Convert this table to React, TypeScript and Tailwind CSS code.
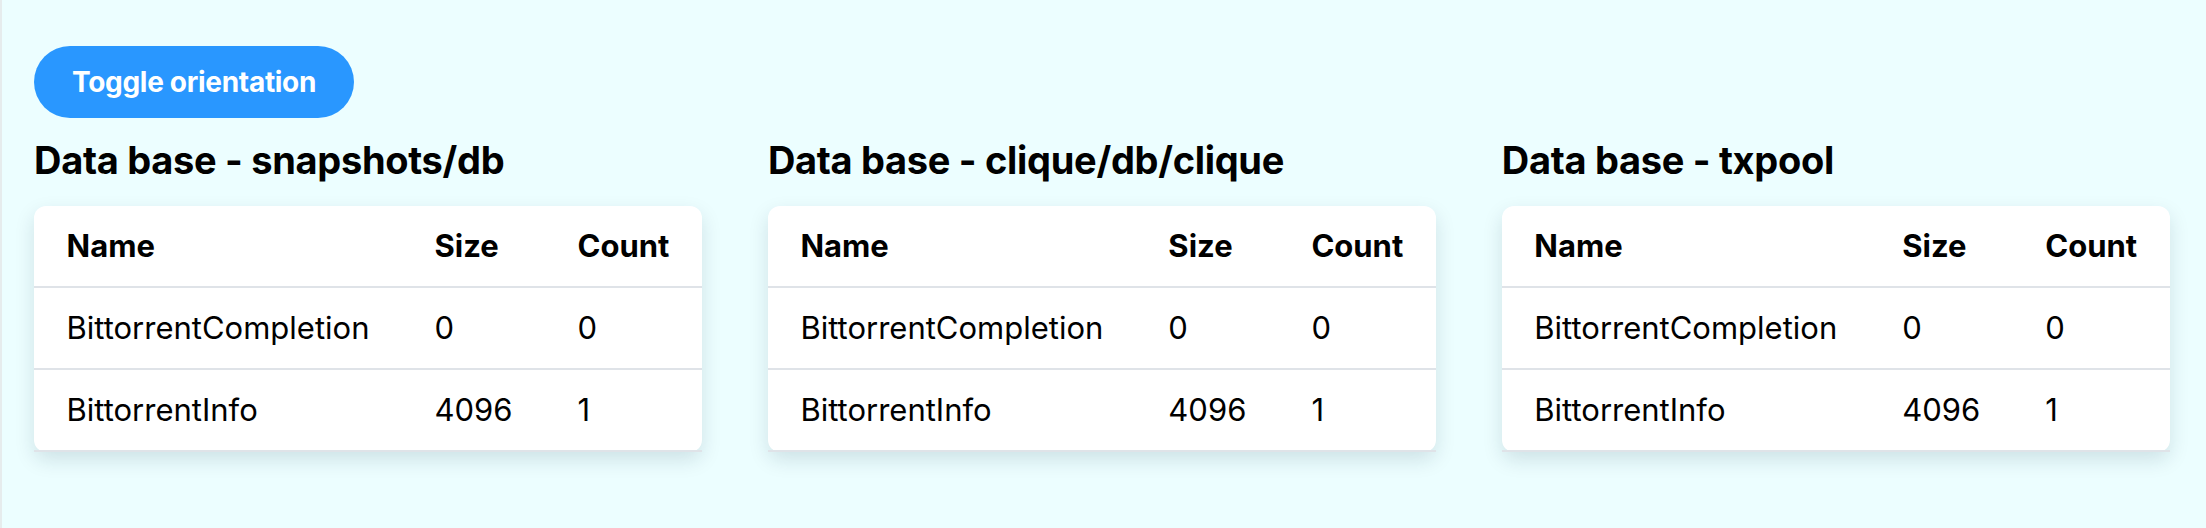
const databases = [
  { name: "snapshots/db" },
  { name: "clique/db/clique" },
  { name: "txpool" },
];

const rows = [
  { name: "BittorrentCompletion", size: 0, count: 0 },
  { name: "BittorrentInfo", size: 4096, count: 1 },
];

function DbTable({ title }: { title: string }) {
  return (
    <section className="flex flex-col">
      <h2 className="text-[38px] leading-[40px] font-bold text-black mb-[26px] tracking-[-0.3px]">
        Data base - {title}
      </h2>
      <div className="w-fit bg-white rounded-[12px] shadow-[0_8px_20px_rgba(0,40,60,0.13)]">
        <table className="border-collapse text-[31px] leading-[48px] text-black">
          <thead>
            <tr className="border-b-2 border-[#dfe3e8]">
              <th className="text-left font-bold px-[32.5px] py-[16px]">Name</th>
              <th className="text-left font-bold px-[32.5px] py-[16px]">Size</th>
              <th className="text-left font-bold px-[32.5px] py-[16px]">Count</th>
            </tr>
          </thead>
          <tbody>
            {rows.map((r) => (
              <tr key={r.name} className="border-b-2 border-[#dfe3e8]">
                <td className="px-[32.5px] py-[16px]">{r.name}</td>
                <td className="px-[32.5px] py-[16px]">{r.size}</td>
                <td className="px-[32.5px] py-[16px]">{r.count}</td>
              </tr>
            ))}
          </tbody>
        </table>
      </div>
    </section>
  );
}

export default function App() {
  return (
    <div
      className="min-h-[528px] w-full bg-[#ecfeff] border-l-2 border-[#e6eced] pl-[32px] pt-[46px]"
      style={{ fontFamily: "Inter, 'Noto Sans', sans-serif" }}
    >
      <button className="h-[72px] px-[38px] rounded-full bg-[#2997ff] text-white text-[28px] font-bold tracking-[-0.3px]">
        Toggle orientation
      </button>
      <div className="flex gap-[66px] mt-[22px]">
        {databases.map((db) => (
          <DbTable key={db.name} title={db.name} />
        ))}
      </div>
    </div>
  );
}
